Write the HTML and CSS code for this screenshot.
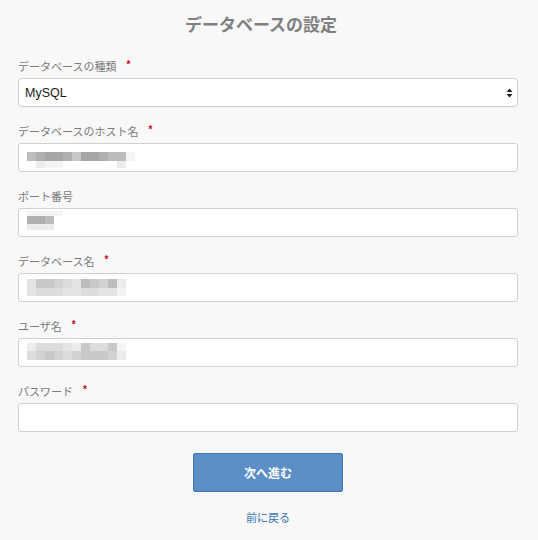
FILE: index.html
```html
<!DOCTYPE html>
<html lang="ja">
<head>
<meta charset="utf-8">
<title>データベースの設定</title>
<link rel="stylesheet" href="styles.css">
</head>
<body>
<main class="page">
  <h1 class="title">データベースの設定</h1>
  <form class="form">
    <div class="field">
      <label class="label">データベースの種類<span class="req">*</span></label>
      <div class="select-wrap">
        <select class="select"><option>MySQL</option></select>
        <svg class="arrows" width="7" height="10" viewBox="0 0 7 10"><path d="M3.5 0.5 L6.5 4 H0.5 Z M3.5 9.5 L6.5 6 H0.5 Z" fill="#222"/></svg>
      </div>
    </div>
    <div class="field">
      <label class="label">データベースのホスト名<span class="req">*</span></label>
      <div class="input">
        <div class="mosaic m-host">
          <i class="c"></i><i class="b"></i><i class="a"></i><i class="a"></i><i class="b"></i><i class="d"></i><i class="a"></i><i class="a"></i><i class="b"></i><i class="c"></i><i class="c"></i><i class="i"></i>
          <i></i><i class="h"></i><i class="i"></i><i class="i"></i><i></i><i></i><i></i><i></i><i></i><i></i><i class="h"></i><i></i>
        </div>
      </div>
    </div>
    <div class="field">
      <label class="label">ポート番号</label>
      <div class="input">
        <div class="mosaic m-port">
          <i class="i"></i><i class="i"></i><i class="i"></i><i class="i"></i>
          <i class="b"></i><i class="b"></i><i class="c"></i><i></i>
          <i class="h"></i><i class="h"></i><i class="h"></i><i></i>
        </div>
      </div>
    </div>
    <div class="field">
      <label class="label">データベース名<span class="req">*</span></label>
      <div class="input">
        <div class="mosaic m-db">
          <i class="g"></i><i class="d"></i><i class="d"></i><i class="e"></i><i class="f"></i><i class="g"></i><i class="c"></i><i class="d"></i><i class="e"></i><i class="c"></i><i class="h"></i>
          <i class="g"></i><i class="f"></i><i class="f"></i><i class="f"></i><i class="g"></i><i class="g"></i><i class="f"></i><i class="f"></i><i class="g"></i><i class="g"></i><i class="i"></i>
        </div>
      </div>
    </div>
    <div class="field">
      <label class="label">ユーザ名<span class="req">*</span></label>
      <div class="input">
        <div class="mosaic m-user">
          <i class="h"></i><i class="f"></i><i class="f"></i><i class="f"></i><i class="g"></i><i class="h"></i><i class="d"></i><i class="f"></i><i class="f"></i><i class="d"></i><i class="i"></i>
          <i class="f"></i><i class="e"></i><i class="d"></i><i class="e"></i><i class="f"></i><i class="e"></i><i class="d"></i><i class="d"></i><i class="d"></i><i class="e"></i><i class="h"></i>
        </div>
      </div>
    </div>
    <div class="field">
      <label class="label">パスワード<span class="req">*</span></label>
      <div class="input"></div>
    </div>
    <div class="actions">
      <button type="button" class="btn">次へ進む</button>
      <a class="back" href="#">前に戻る</a>
    </div>
  </form>
</main>
</body>
</html>
```
FILE: styles.css
```css
* { box-sizing: border-box; }
html, body { margin: 0; padding: 0; }
body {
  background: #f8f8f8;
  font-family: "Noto Sans CJK JP", "Noto Sans", "Liberation Sans", sans-serif;
  color: #777;
}
.page {
  width: 538px;
  padding: 12px 20px 0 18px;
}
.title {
  margin: 0;
  height: 24px;
  text-align: center;
  font-size: 17px;
  line-height: 24px;
  font-weight: 700;
  color: #808080;
  padding-right: 14px;
}
.form {
  margin-top: 22px;
  display: flex;
  flex-direction: column;
}
.field {
  display: flex;
  flex-direction: column;
  gap: 4px;
  margin-bottom: 16px;
}
.label {
  display: flex;
  align-items: center;
  height: 16px;
  font-size: 11px;
  line-height: 16px;
  color: #7a7a7a;
}
.req {
  color: #d0021b;
  font-family: "Liberation Sans", sans-serif;
  font-weight: 700;
  font-size: 10px;
  line-height: 16px;
  margin-left: 10px;
  position: relative;
  top: -1px;
}
.select-wrap { position: relative; height: 29px; }
.select {
  appearance: none;
  -webkit-appearance: none;
  display: block;
  width: 500px;
  height: 29px;
  margin: 0;
  border: 1px solid #cdd1d4;
  border-radius: 4px;
  background: #fff;
  padding: 0 6px;
  font-family: "Liberation Sans", "Noto Sans", sans-serif;
  font-size: 12.5px;
  color: #1a1a1a;
  box-shadow: 0 1px 1px rgba(0,0,0,0.04);
}
.arrows {
  position: absolute;
  right: 5px;
  top: 10px;
  pointer-events: none;
}
.input {
  width: 500px;
  height: 29px;
  border: 1px solid #cdd1d4;
  border-radius: 3px;
  background: #fff;
  padding: 0 8px;
}
.mosaic {
  display: grid;
  grid-auto-columns: 9px;
}
.mosaic i { display: block; }
.m-host { grid-template-columns: repeat(12, 9px); grid-template-rows: 9px 7px; margin-top: 8px; }
.m-port { grid-template-columns: repeat(4, 9px); grid-template-rows: 5px 8px 6px; margin-top: 2px; }
.m-db { grid-template-columns: repeat(11, 9px); grid-template-rows: 9px 8px; margin-top: 5px; }
.m-user { grid-template-columns: repeat(11, 9px); grid-template-rows: 8px 9px; margin-top: 4px; }
.mosaic .a { background: #a6a6a6; }
.mosaic .b { background: #b0b0b0; }
.mosaic .c { background: #bcbcbc; }
.mosaic .d { background: #c8c8c8; }
.mosaic .e { background: #d2d2d2; }
.mosaic .f { background: #dcdcdc; }
.mosaic .g { background: #e4e4e4; }
.mosaic .h { background: #ececec; }
.mosaic .i { background: #f4f4f4; }
.actions {
  margin-top: 5px;
  display: flex;
  flex-direction: column;
  align-items: center;
}
.btn {
  width: 150px;
  height: 39px;
  background: #5b8fc5;
  border: 1px solid #3f78b8;
  border-radius: 2px;
  color: #fff;
  font-family: "Noto Sans CJK JP", sans-serif;
  font-weight: 700;
  font-size: 12px;
  padding: 0;
}
.back {
  margin-top: 17px;
  font-size: 11px;
  line-height: 16px;
  color: #3a74b0;
  text-decoration: none;
}
```
